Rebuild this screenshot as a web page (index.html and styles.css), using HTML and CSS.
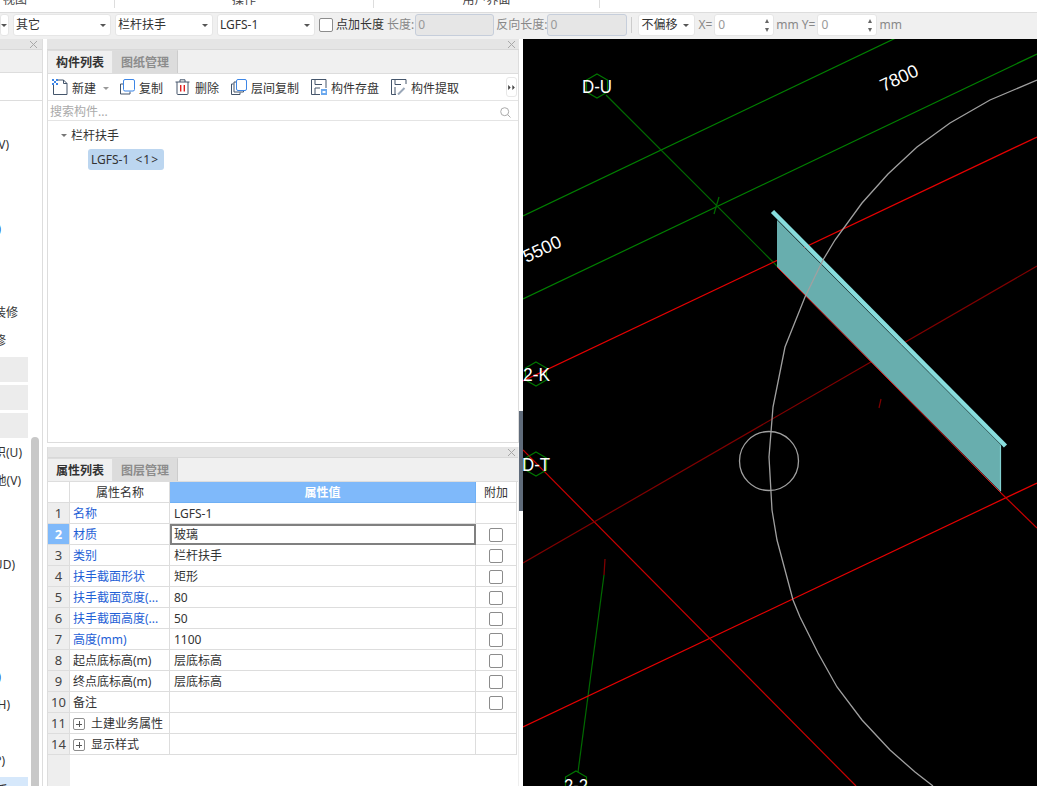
FILE: index.html
```html
<!DOCTYPE html>
<html lang="zh">
<head>
<meta charset="utf-8">
<title>栏杆扶手</title>
<link rel="stylesheet" href="styles.css">
</head>
<body>
<div class="ribbon">
  <div class="rgroup g1"><span class="rlabel">视图</span></div>
  <div class="rgroup g2"><span class="rlabel">操作</span></div>
  <div class="rgroup g3"><span class="rlabel">用户界面</span></div>
</div>

<div class="optbar">
  <div class="sel s0"><i class="caret"></i></div>
  <div class="sel s1"><span>其它</span><i class="caret"></i></div>
  <div class="sel s1"><span>栏杆扶手</span><i class="caret"></i></div>
  <div class="sel s1"><span>LGFS-1</span><i class="caret"></i></div>
  <i class="chk chk-top"></i>
  <span class="lbl dark l-a">点加长度</span>
  <span class="lbl l-b">长度:</span>
  <div class="dis d1">0</div>
  <span class="lbl l-c">反向长度:</span>
  <div class="dis d2">0</div>
  <i class="vsep"></i>
  <div class="sel s2"><span>不偏移</span><i class="caret"></i></div>
  <span class="lbl l-d">X=</span>
  <div class="spin">0<b class="arrows"><i class="up"></i><i class="down"></i></b></div>
  <span class="lbl l-e">mm</span>
  <span class="lbl l-f">Y=</span>
  <div class="spin">0<b class="arrows"><i class="up"></i><i class="down"></i></b></div>
  <span class="lbl l-e">mm</span>
</div>

<div class="main">
  <aside class="left">
    <div class="title"><svg class="x" viewBox="0 0 7 7"><path d="M0 0L7 7M7 0L0 7"/></svg></div>
    <div class="ltabs"></div>
    <div class="lspace"></div>
    <div class="lbody">
      <div class="list">
        <div class="row"></div>
        <div class="row"><span class="e9">墙面(V)</span></div>
        <div class="row"></div>
        <div class="row"></div>
        <div class="row"><span class="e1 blue">(O)</span></div>
        <div class="row"></div>
        <div class="row"></div>
        <div class="row"><span class="e18">内装修</span></div>
        <div class="row"><span class="e6">外装修</span></div>
        <div class="row"><div class="cell"></div></div>
        <div class="row"><div class="cell"></div></div>
        <div class="row"><div class="cell"></div></div>
        <div class="row"><span class="e22">组织(U)</span></div>
        <div class="row"><span class="e21">场地(V)</span></div>
        <div class="row"></div>
        <div class="row"></div>
        <div class="row"><span class="e15">(UD)</span></div>
        <div class="row"></div>
        <div class="row"></div>
        <div class="row"></div>
        <div class="row"><span class="e1 blue">(Q)</span></div>
        <div class="row"><span class="e10">(H)</span></div>
        <div class="row"></div>
        <div class="row"><span class="e5">(P)</span></div>
        <div class="row"><div class="cell hi"><span class="e22">扶手(S)</span></div></div>
      </div>
      <div class="scroll"><i class="thumb"></i></div>
    </div>
  </aside>

  <div class="center">
    <section class="panel p1">
      <div class="title"><svg class="x" viewBox="0 0 7 7"><path d="M0 0L7 7M7 0L0 7"/></svg></div>
      <div class="tabs"><span class="tab on">构件列表</span><span class="tab">图纸管理</span></div>
      <div class="tools">
        <span class="tool t-new"><svg class="ic" viewBox="0 0 16 16"><path class="st" d="M1.500 6V15.500H15V4.500L11.500 1H5"/><path class="st" d="M11.500 1V4.500H15"/><path class="chq" d="M0 0h2v2H0zM4 0h2v2H4zM2 2h2v2H2zM0 4h2v2H0zM4 4h2v2H4z"/></svg>新建<i class="caret lite"></i></span>
        <span class="tool t-copy"><svg class="ic" viewBox="0 0 16 16"><path class="st" d="M4 5H1.500V15H11V12.500"/><rect class="bl" x="4.500" y="0.500" width="11" height="11.500" rx="1.500"/></svg>复制</span>
        <span class="tool t-del"><svg class="ic" viewBox="0 0 16 16"><path class="st" d="M0.500 3H14.500M5 3V0.800H10V3M2 3V14.500Q2 15.500 3 15.500H12Q13 15.500 13 14.500V3"/><path class="rd" d="M5.700 6V12.500M9.300 6V12.500"/></svg>删除</span>
        <span class="tool t-lay"><svg class="ic" viewBox="0 0 16 16"><path class="st" d="M2.500 5H0.500V15.500H9V13.500"/><path class="st" d="M5 3H3V13H12.500V12"/><rect class="bl" x="5.500" y="0.500" width="10" height="11" rx="1.500"/></svg>层间复制</span>
        <span class="tool t-save"><svg class="ic" viewBox="0 0 16 16"><path class="st" d="M9 15.500H0.500V0.500H15V9"/><path class="st" d="M4 1V5.500H11"/><path class="st" d="M4 15V9H9"/><rect class="fillb" x="10" y="10" width="6" height="6"/><rect class="wh" x="11.500" y="12" width="3" height="2"/></svg>构件存盘</span>
        <span class="tool t-get"><svg class="ic" viewBox="0 0 16 16"><path class="st" d="M5 15.500H0.500V0.500H15V5"/><path class="st" d="M4 1V5.500H10"/><path class="st" d="M4 15V8"/><path class="pen" d="M7 15.500L13.500 9"/></svg>构件提取</span>
        <span class="more"><svg viewBox="0 0 8 6"><path d="M0 0L3 3L0 6zM5 0L8 3L5 6z"/></svg></span>
      </div>
      <div class="search"><span>搜索构件...</span><svg class="mag" viewBox="0 0 11 11"><circle cx="4.700" cy="4.700" r="4"/><path d="M7.600 7.600L10.500 10.500"/></svg></div>
      <div class="tree">
        <div class="node"><i class="tricaret"></i>栏杆扶手</div>
        <div class="leaf">LGFS-1 <span class="cnt">&lt;1&gt;</span></div>
      </div>
    </section>

    <section class="panel p2">
      <div class="title"><svg class="x" viewBox="0 0 7 7"><path d="M0 0L7 7M7 0L0 7"/></svg></div>
      <div class="tabs"><span class="tab on">属性列表</span><span class="tab">图层管理</span></div>
      <table class="props">
        <colgroup><col class="c0"><col class="c1"><col class="c2"><col class="c3"></colgroup>
        <thead>
          <tr><th class="corner"></th><th>属性名称</th><th class="valh">属性值</th><th>附加</th></tr>
        </thead>
        <tbody>
          <tr><td class="idx">1</td><td class="nm">名称</td><td>LGFS-1</td><td></td></tr>
          <tr><td class="idx cur">2</td><td class="nm">材质</td><td class="edit">玻璃</td><td><i class="chk"></i></td></tr>
          <tr><td class="idx">3</td><td class="nm">类别</td><td>栏杆扶手</td><td><i class="chk"></i></td></tr>
          <tr><td class="idx">4</td><td class="nm">扶手截面形状</td><td>矩形</td><td><i class="chk"></i></td></tr>
          <tr><td class="idx">5</td><td class="nm">扶手截面宽度(...</td><td>80</td><td><i class="chk"></i></td></tr>
          <tr><td class="idx">6</td><td class="nm">扶手截面高度(...</td><td>50</td><td><i class="chk"></i></td></tr>
          <tr><td class="idx">7</td><td class="nm">高度(mm)</td><td>1100</td><td><i class="chk"></i></td></tr>
          <tr><td class="idx">8</td><td>起点底标高(m)</td><td>层底标高</td><td><i class="chk"></i></td></tr>
          <tr><td class="idx">9</td><td>终点底标高(m)</td><td>层底标高</td><td><i class="chk"></i></td></tr>
          <tr><td class="idx">10</td><td>备注</td><td></td><td><i class="chk"></i></td></tr>
          <tr><td class="idx">11</td><td><span class="plus"></span>土建业务属性</td><td></td><td></td></tr>
          <tr><td class="idx">14</td><td><span class="plus"></span>显示样式</td><td></td><td></td></tr>
        </tbody>
      </table>
      <div class="filler"><i class="strip"></i></div>
    </section>
  </div>

  <div class="split"><i class="grip"></i></div>

  <div class="canvas">
    <svg class="cad" viewBox="523 39 514 747" xmlns="http://www.w3.org/2000/svg">
      <g class="l-green">
        <line x1="523" y1="216" x2="900" y2="36"/>
        <line x1="523" y1="299" x2="1037" y2="54"/>
      </g>
      <g class="l-dgreen">
        <line x1="606" y1="95" x2="778" y2="267"/>
        <line x1="714" y1="214" x2="719" y2="197"/>
        <line x1="578" y1="772" x2="604" y2="575"/>
      </g>
      <line class="l-dred" x1="604" y1="575" x2="605" y2="559"/>
      <g class="l-red">
        <line x1="523" y1="381" x2="1037" y2="137"/>
        <line x1="523" y1="727" x2="1037" y2="483"/>
      </g>
      <g class="l-mred">
        <line x1="523" y1="450" x2="856" y2="786"/>
        <line x1="1001" y1="493" x2="1037" y2="528"/>
      </g>
      <line class="l-dred" x1="523" y1="563" x2="1037" y2="266"/>
      <line class="l-dred" x1="879" y1="408" x2="881" y2="399"/>

      <polygon class="glass" points="777,220 1001,445 1001,492 777,267"/>
      <line class="glass-edge" x1="1000.500" y1="446" x2="1000.500" y2="491"/>
      <line class="glass-low" x1="777" y1="267" x2="1001" y2="493"/>
      <line class="rail" x1="772.500" y1="211.500" x2="1005.500" y2="446"/>

      <polyline class="arc" points="1037,80 990,100 950,123 917,147 888,174 862,203 835,240 823,260 805,297 785,347 773,407 769,457 772,510 777,540 793,600 800,617 818,653 837,687 862,720 890,750 915,772 933,786"/>
      <circle class="arc" cx="769" cy="461" r="29.500"/>

      <polygon class="hex" points="597,74 607.500,80 607.500,92 597,98 586.500,92 586.500,80"/>
      <polygon class="hex" points="536,362 546.500,368 546.500,380 536,386 525.500,380 525.500,368"/>
      <polygon class="hex" points="536,452 546.500,458 546.500,470 536,476 525.500,470 525.500,458"/>
      <polygon class="hex" points="576,771 586.500,777 586.500,789 576,795 565.500,789 565.500,777"/>

      <text class="cadt tall" x="582" y="93" textLength="30" lengthAdjust="spacingAndGlyphs">D-U</text>
      <text class="cadt tall" x="523" y="381" textLength="27" lengthAdjust="spacingAndGlyphs">2-K</text>
      <text class="cadt tall" x="522" y="471" textLength="28" lengthAdjust="spacingAndGlyphs">D-T</text>
      <text class="cadt tall" x="564" y="792" textLength="24" lengthAdjust="spacingAndGlyphs">2-2</text>
      <text class="cadt" transform="translate(899 78) rotate(-25)" x="-20" y="6">7800</text>
      <text class="cadt" transform="translate(542 249) rotate(-25)" x="-20" y="6">5500</text>
    </svg>
  </div>
</div>
</body>
</html>
```
FILE: styles.css
```css
* { box-sizing: border-box; }
html, body { margin: 0; height: 100%; }
body {
  width: 1037px; height: 786px; overflow: hidden;
  display: flex; flex-direction: column;
  font: 12px/16px "Noto Sans", "Noto Sans CJK SC", sans-serif;
  color: #333; background: #fff;
}
i, b { display: block; font-style: normal; }

/* ribbon remnants */
.ribbon { height: 13px; flex: none; display: flex; align-items: flex-start; background: #fff; border-bottom: 1px solid #ddd; overflow: hidden; }
.rgroup { height: 8px; border-right: 1px solid #ddd; flex: none; text-align: center; }
.rlabel { display: block; margin-top: -9px; line-height: 18px; color: #444; }
.g1 { width: 115px; text-align: left; padding-left: 3px; }
.g2 { width: 259px; }
.g3 { width: 226px; }

/* option bar */
.optbar { height: 26px; flex: none; background: #f0f0f0; display: flex; align-items: center; padding-bottom: 2px; overflow: hidden; white-space: nowrap; }
.sel { height: 22px; background: #fff; border: 1px solid #e6e6e6; border-radius: 3px; display: flex; align-items: center; justify-content: space-between; padding: 0 4px 0 2px; flex: none; margin-right: 4px; color: #333; }
.s0 { width: 9px; padding: 0; justify-content: flex-start; }
.s1 { width: 98px; }
.s2 { width: 57px; margin-right: 3px; padding-right: 5px; }
.caret { width: 0; height: 0; border: 3px solid transparent; border-top-color: #555; border-bottom: 0; flex: none; }
.caret.lite { border-top-color: #999; margin-left: 7px; }
.chk { width: 14px; height: 14px; border: 1px solid #8c8c8c; border-radius: 2px; background: #fff; margin: 0 auto; flex: none; }
.chk-top { margin: 0 3px 0 0; }
.lbl { color: #888; flex: none; }
.dark { color: #333; }
.l-a { margin-right: 3px; }
.l-b { margin-right: 1px; }
.l-c { margin: 0 0 0 2px; }
.l-d { margin-right: 2px; }
.l-e { margin: 0 0 0 2px; }
.l-f { margin: 0 2px 0 3px; }
.dis { height: 22px; background: #e6e6e6; border: 1px solid #c6cedb; border-radius: 3px; color: #999; padding-left: 2px; line-height: 20px; flex: none; }
.d1 { width: 79px; }
.d2 { width: 80px; }
.vsep { width: 1px; height: 16px; background: #ccc; margin: 0 6px 0 4px; flex: none; }
.spin { width: 60px; height: 22px; background: #fff; border: 1px solid #e6e6e6; border-radius: 3px; color: #999; padding-left: 3px; line-height: 20px; flex: none; display: flex; justify-content: space-between; align-items: center; }
.arrows { display: flex; flex-direction: column; gap: 5px; margin-right: 4px; }
.up, .down { width: 0; height: 0; border: 2.5px solid transparent; }
.up { border-bottom-color: #666; border-top: 0; border-bottom-width: 4px; }
.down { border-top-color: #666; border-bottom: 0; border-top-width: 4px; }

/* main */
.main { flex: 1; min-height: 0; display: flex; }

.left { width: 43px; flex: none; border-right: 1px solid #ddd; display: flex; flex-direction: column; overflow: hidden; }
.title { height: 11px; flex: none; background: #e5e5e5; border-bottom: 1px solid #d8d8d8; display: flex; justify-content: flex-end; align-items: center; padding-right: 5px; }
.x { width: 7px; height: 7px; }
.x path { stroke: #a8a8a8; fill: none; stroke-width: 1; }
.ltabs { height: 23px; flex: none; background: #f0f0f0; border-bottom: 1px solid #ddd; }
.lspace { height: 28px; flex: none; border-bottom: 1px solid #ddd; }
.lbody { flex: 1; min-height: 0; display: flex; }
.list { width: 31px; flex: none; overflow: hidden; padding-top: 2px; }
.row { height: 28px; display: flex; align-items: flex-start; justify-content: flex-start; overflow: hidden; }
.row > span, .cell > span { flex: none; display: flex; justify-content: flex-end; white-space: nowrap; line-height: 28px; }
.e1 { width: 1px; } .e5 { width: 5px; } .e6 { width: 6px; } .e9 { width: 9px; }
.e10 { width: 10px; } .e15 { width: 15px; } .e18 { width: 18px; }
.e21 { width: 21px; } .e22 { width: 22px; }
.blue { color: #2a5fd0; }
.cell { width: 28px; height: 25px; background: #ececec; margin-top: 2px; display: flex; align-items: flex-start; }
.cell.hi { background: #d6e8fb; }
.scroll { width: 8px; flex: none; padding-top: 336px; }
.thumb { height: 400px; background: #c8c8c8; border-radius: 4px 4px 0 0; }

.center { width: 472px; margin-left: 4px; flex: none; display: flex; flex-direction: column; gap: 4px; }
.panel { border: 1px solid #ddd; border-top: 0; display: flex; flex-direction: column; background: #fff; }
.p1 { height: 404px; }
.p2 { flex: 1; min-height: 0; border-bottom: 0; overflow: hidden; border-right-color: #eee; }
.panel .title { margin: 0 -1px; padding-right: 4px; }
.tabs { height: 24px; flex: none; background: #f0f0f0; border-bottom: 1px solid #ddd; display: flex; }
.tab { width: 65px; text-align: center; line-height: 23px; font-weight: 700; color: #8c8c8c; background: #dcdcdc; border-right: 1px solid #ccc; border-top: 1px solid #ddd; }
.tab.on { color: #333; background: #f0f0f0; border-right: 1px solid #ddd; }

.tools { height: 27px; flex: none; display: flex; align-items: center; border-bottom: 1px solid #e4e4e4; padding: 3px 0 0 4px; }
.tool { display: flex; align-items: center; color: #333; white-space: nowrap; }
.ic { width: 16px; height: 16px; margin: -3px 4px 0 0; flex: none; }
.st { fill: none; stroke: #44556b; stroke-width: 1; }
.bl { fill: #fff; stroke: #3d86e6; stroke-width: 1; }
.chq { fill: #3d86e6; }
.rd { stroke: #e02020; stroke-width: 1.4; fill: none; }
.fillb { fill: #6aa8ee; }
.wh { fill: #fff; }
.pen { stroke: #9aa7b8; stroke-width: 2; fill: none; }
.t-copy { margin-left: 10px; }
.t-del { margin-left: 12px; }
.t-lay { margin-left: 12px; }
.t-save { margin-left: 12px; }
.t-get { margin-left: 12px; }
.more { margin: -3px 1px 0 auto; width: 11px; height: 20px; background: #fff; border: 1px solid #e8e8e8; border-radius: 3px; display: flex; align-items: center; justify-content: center; }
.more svg { width: 7px; height: 5px; fill: #444; }

.search { height: 20px; flex: none; border-bottom: 1px solid #e4e4e4; display: flex; justify-content: space-between; align-items: center; padding: 3px 7px 0 2px; color: #aaa; }
.mag { width: 11px; height: 11px; fill: none; stroke: #aaa; stroke-width: 1; }

.tree { padding: 6px 0 0 13px; flex: 1; }
.node { display: flex; align-items: center; height: 17px; line-height: 17px; color: #333; }
.tricaret { width: 0; height: 0; border: 3px solid transparent; border-top-color: #777; border-bottom: 0; margin-right: 4px; }
.leaf { margin: 5px 0 0 27px; width: 76px; height: 21px; background: #bcd6f0; border-radius: 3px; line-height: 20px; padding: 1px 0 0 3px; white-space: nowrap; }
.cnt { letter-spacing: 1px; margin-left: 3px; }

.props { width: 469px; border-collapse: separate; border-spacing: 0; table-layout: fixed; flex: none; }
.c0 { width: 22px; } .c1 { width: 100px; } .c2 { width: 306px; } .c3 { width: 41px; }
.props th, .props td { height: 21px; padding: 1px 3px 0; border-right: 1px solid #ddd; border-bottom: 1px solid #ddd; font-weight: 400; white-space: nowrap; overflow: hidden; text-align: left; line-height: 19px; }
.props td:nth-child(3) { padding-left: 4px; }
.props th { text-align: center; }
.props th:nth-child(2) { padding-left: 4px; }
.props th.corner { background: #fff; }
.props th.valh { background: #7fb9fa; color: #fff; font-weight: 700; border-right-color: #6fb0f5; border-bottom-color: #6fb0f5; }
.props td.idx { background: #eee; text-align: center; padding: 0; color: #444; font-size: 13px; line-height: 20px; }
.props td.idx.cur { background: #7fb9fa; color: #fff; font-weight: 700; }
.props td.nm { color: #1f5fd6; }
.props td.edit { border: 2px solid #808080; padding: 0 2px; line-height: 17px; }
.plus { display: inline-block; width: 12px; height: 12px; border: 1px solid #8c8c8c; border-radius: 2px; margin: 0 6px 0 0; vertical-align: -2px; background: linear-gradient(#555,#555) center/6px 1px no-repeat, linear-gradient(#555,#555) center/1px 6px no-repeat; }
.filler { flex: 1; display: flex; }
.strip { width: 22px; background: #eee; }

.split { width: 4px; flex: none; background: #fff; padding-top: 372px; }
.grip { height: 100px; background: #5f6b7a; }

.canvas { flex: 1; min-width: 0; background: #000; overflow: hidden; }
.cad { display: block; width: 514px; height: 747px; }
.cad line, .cad polyline, .cad polygon, .cad circle { fill: none; stroke-width: 1.2; }
.l-green line { stroke: #008000; }
.l-dgreen line { stroke: #006a00; }
.l-red line { stroke: #e60000; }
.l-mred line { stroke: #c80000; }
.cad .l-dred { stroke: #800000; }
.cad .glass { fill: #68aeae; stroke: none; }
.cad .glass-edge { stroke: #82d0d0; }
.cad .glass-low { stroke: #e02020; stroke-width: 1; }
.cad .rail { stroke: #88dddd; stroke-width: 4.5; }
.cad .arc { stroke: #a0a0a0; stroke-width: 1.3; }
.cad .hex { stroke: #007800; }
.cadt { fill: #fff; font: 18px "Liberation Sans", sans-serif; }
.tall { font-size: 19px; }
```
